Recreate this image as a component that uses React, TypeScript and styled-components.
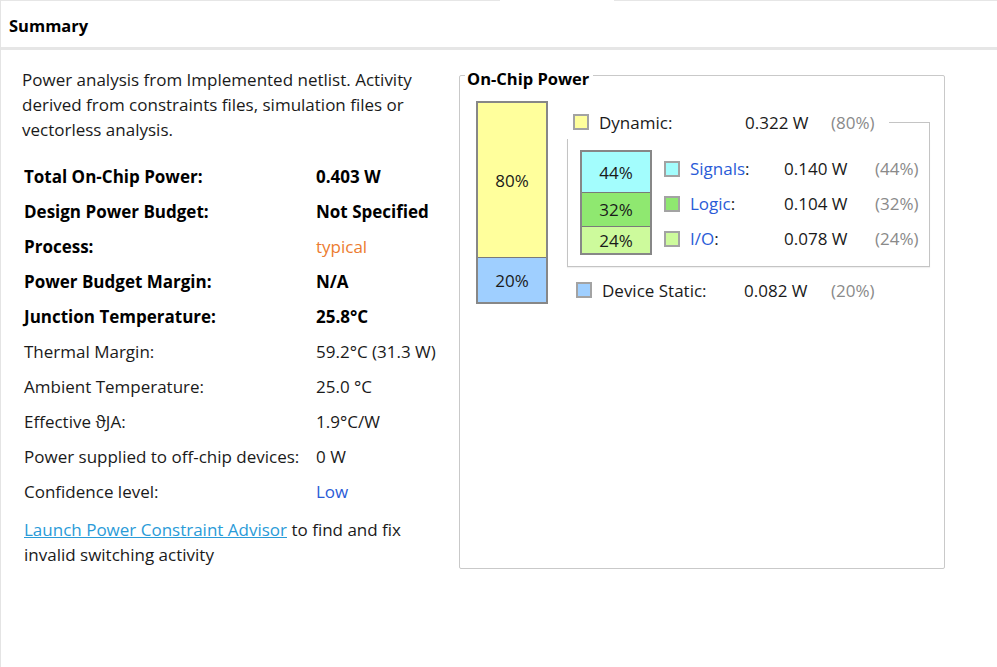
import React from "react";
import styled, { createGlobalStyle } from "styled-components";

const Global = createGlobalStyle`
  html, body { margin: 0; padding: 0; background: #ffffff; }
  body { font-family: "Open Sans", "Noto Sans", "Liberation Sans", sans-serif; color: #111; }
  * { box-sizing: border-box; }
`;

const Page = styled.div`
  width: 997px;
  height: 667px;
  border-left: 1px solid #e4e4e4;
  background: #fff;
  overflow: hidden;
  display: flex;
  flex-direction: column;
`;

const TopLine = styled.div`
  display: flex;
  height: 1px;
  flex: none;
`;

const TopSeg = styled.div<{ $w?: number; $on?: boolean }>`
  height: 1px;
  ${(p) => (p.$w ? `width: ${p.$w}px;` : "flex: 1;")}
  background: ${(p) => (p.$on ? "#e6e6e6" : "#ffffff")};
`;

const Header = styled.div`
  height: 49px;
  flex: none;
  display: flex;
  align-items: center;
  padding: 2px 0 0 8px;
  border-bottom: 3px solid #e6e6e6;
  font-size: 16.5px;
  font-weight: 700;
  color: #000;
`;

const Content = styled.div`
  display: flex;
  align-items: flex-start;
  padding-left: 21px;
`;

const LeftCol = styled.div`
  width: 437px;
  flex: none;
  padding-top: 17px;
  font-size: 17px;
`;

const Para = styled.p`
  margin: 0;
  line-height: 25px;
  color: #1a1a1a;
`;

const Table = styled.div`
  display: grid;
  grid-template-columns: 292px auto;
  margin-top: 17px;
  padding-left: 2px;
`;

const Cell = styled.div<{ $bold?: boolean; $color?: string }>`
  height: 35px;
  display: flex;
  align-items: center;
  white-space: nowrap;
  font-weight: ${(p) => (p.$bold ? 700 : 400)};
  color: ${(p) => p.$color || (p.$bold ? "#000" : "#1a1a1a")};
`;

const AdvisorPara = styled(Para)`
  margin-top: 8px;
  padding-left: 2px;
`;

const Link = styled.a`
  color: #2a9bd8;
  text-decoration: underline;
  cursor: pointer;
`;

const Group = styled.fieldset`
  width: 486px;
  height: 509px;
  margin: 10px 0 0 0;
  padding: 11px 0 0 0;
  border: 1px solid #c9c9c9;
  border-radius: 2px;
  min-width: 0;
`;

const GroupTitle = styled.legend`
  margin-left: 5px;
  padding: 8px 4px 0 2px;
  line-height: 22px;
  font-size: 16.5px;
  font-weight: 700;
  color: #000;
`;

const ChartRow = styled.div`
  display: flex;
  align-items: flex-start;
  margin-left: 16px;
`;

const Bar = styled.div<{ $w: number }>`
  width: ${(p) => p.$w}px;
  flex: none;
  display: flex;
  flex-direction: column;
  border: 2px solid #878787;
  background: #7a7a7a;
  gap: 1px;
`;

const Segment = styled.div<{ $bg: string }>`
  display: flex;
  align-items: center;
  justify-content: center;
  background: ${(p) => p.$bg};
  font-size: 17px;
  color: #1a1a1a;
`;

const Breakdown = styled.div`
  margin-left: 19px;
  margin-top: 4px;
  width: 363px;
  display: flex;
  flex-direction: column;
`;

const HeadRow = styled.div<{ $pad: number }>`
  display: flex;
  height: 34px;
  align-items: center;
  padding-left: ${(p) => p.$pad}px;
  font-size: 17px;
`;

const Swatch = styled.span<{ $bg: string }>`
  width: 16px;
  height: 16px;
  flex: none;
  background: ${(p) => p.$bg};
  border: 2px solid #a3a3a3;
  margin-right: 10px;
`;

const Label = styled.span<{ $w: number }>`
  width: ${(p) => p.$w}px;
  flex: none;
  white-space: nowrap;
  color: #1a1a1a;
`;

const LinkLabel = styled.span`
  color: #2a5bd7;
`;

const Value = styled.span<{ $w: number }>`
  width: ${(p) => p.$w}px;
  flex: none;
  white-space: nowrap;
  color: #1a1a1a;
`;

const Pct = styled.span<{ $w?: number }>`
  ${(p) => (p.$w ? `width: ${p.$w}px; flex: none;` : "")}
  white-space: nowrap;
  color: #8a8a8a;
`;

const Connector = styled.div`
  flex: 1;
  align-self: flex-end;
  height: 17px;
  border-top: 1px solid #c4c4c4;
  border-right: 1px solid #c4c4c4;
`;

const DynBox = styled.div`
  display: flex;
  align-items: flex-start;
  border: 1px solid #c4c4c4;
  border-top: none;
  padding: 11px 0 10px 12px;
  box-shadow: 0 1px 1px rgba(0, 0, 0, 0.06);
`;

const SubRows = styled.div`
  display: flex;
  flex-direction: column;
  margin-left: 12px;
  margin-top: 1px;
`;

const SubRow = styled.div`
  display: flex;
  height: 35px;
  align-items: center;
  font-size: 17px;
`;

const StaticRow = styled(HeadRow)`
  margin-top: 6px;
`;

const subs = [
  { name: "Signals", color: "#a3fdfd", value: "0.140 W", pct: "(44%)", h: 40 },
  { name: "Logic", color: "#8fe870", value: "0.104 W", pct: "(32%)", h: 33 },
  { name: "I/O", color: "#cdfa9c", value: "0.078 W", pct: "(24%)", h: 26 },
];

const rows: { label: string; value: string; bold?: boolean; color?: string }[] = [
  { label: "Total On-Chip Power:", value: "0.403 W", bold: true },
  { label: "Design Power Budget:", value: "Not Specified", bold: true },
  { label: "Process:", value: "typical", bold: true, color: "#ec7c30" },
  { label: "Power Budget Margin:", value: "N/A", bold: true },
  { label: "Junction Temperature:", value: "25.8°C", bold: true },
  { label: "Thermal Margin:", value: "59.2°C (31.3 W)" },
  { label: "Ambient Temperature:", value: "25.0 °C" },
  { label: "Effective ϑJA:", value: "1.9°C/W" },
  { label: "Power supplied to off-chip devices:", value: "0 W" },
  { label: "Confidence level:", value: "Low", color: "#2a5bd7" },
];

export default function App() {
  return (
    <>
      <Global />
      <Page>
        <TopLine>
          <TopSeg $w={499} $on />
          <TopSeg $w={114} />
          <TopSeg $on />
        </TopLine>
        <Header>Summary</Header>
        <Content>
          <LeftCol>
            <Para>
              Power analysis from Implemented netlist. Activity
              <br />
              derived from constraints files, simulation files or
              <br />
              vectorless analysis.
            </Para>
            <Table>
              {rows.map((r) => (
                <React.Fragment key={r.label}>
                  <Cell $bold={r.bold}>{r.label}</Cell>
                  <Cell $bold={r.bold && !r.color} $color={r.color}>
                    {r.value}
                  </Cell>
                </React.Fragment>
              ))}
            </Table>
            <AdvisorPara>
              <Link>Launch Power Constraint Advisor</Link> to find and fix
              <br />
              invalid switching activity
            </AdvisorPara>
          </LeftCol>
          <Group>
            <GroupTitle>On-Chip Power</GroupTitle>
            <ChartRow>
              <Bar $w={72}>
                <Segment $bg="#ffff9c" style={{ height: 154 }}>80%</Segment>
                <Segment $bg="#9fcfff" style={{ height: 44 }}>20%</Segment>
              </Bar>
              <Breakdown>
                <HeadRow $pad={6}>
                  <Swatch $bg="#ffff9c" />
                  <Label $w={146}>Dynamic:</Label>
                  <Value $w={86}>0.322 W</Value>
                  <Pct $w={58}>(80%)</Pct>
                  <Connector />
                </HeadRow>
                <DynBox>
                  <Bar $w={72}>
                    {subs.map((s) => (
                      <Segment key={s.name} $bg={s.color} style={{ height: s.h }}>
                        {s.pct.replace(/[()]/g, "")}
                      </Segment>
                    ))}
                  </Bar>
                  <SubRows>
                    {subs.map((s) => (
                      <SubRow key={s.name}>
                        <Swatch $bg={s.color} />
                        <Label $w={94}>
                          <LinkLabel>{s.name}</LinkLabel>:
                        </Label>
                        <Value $w={91}>{s.value}</Value>
                        <Pct>{s.pct}</Pct>
                      </SubRow>
                    ))}
                  </SubRows>
                </DynBox>
                <StaticRow $pad={9}>
                  <Swatch $bg="#9fcfff" />
                  <Label $w={142}>Device Static:</Label>
                  <Value $w={87}>0.082 W</Value>
                  <Pct>(20%)</Pct>
                </StaticRow>
              </Breakdown>
            </ChartRow>
          </Group>
        </Content>
      </Page>
    </>
  );
}
